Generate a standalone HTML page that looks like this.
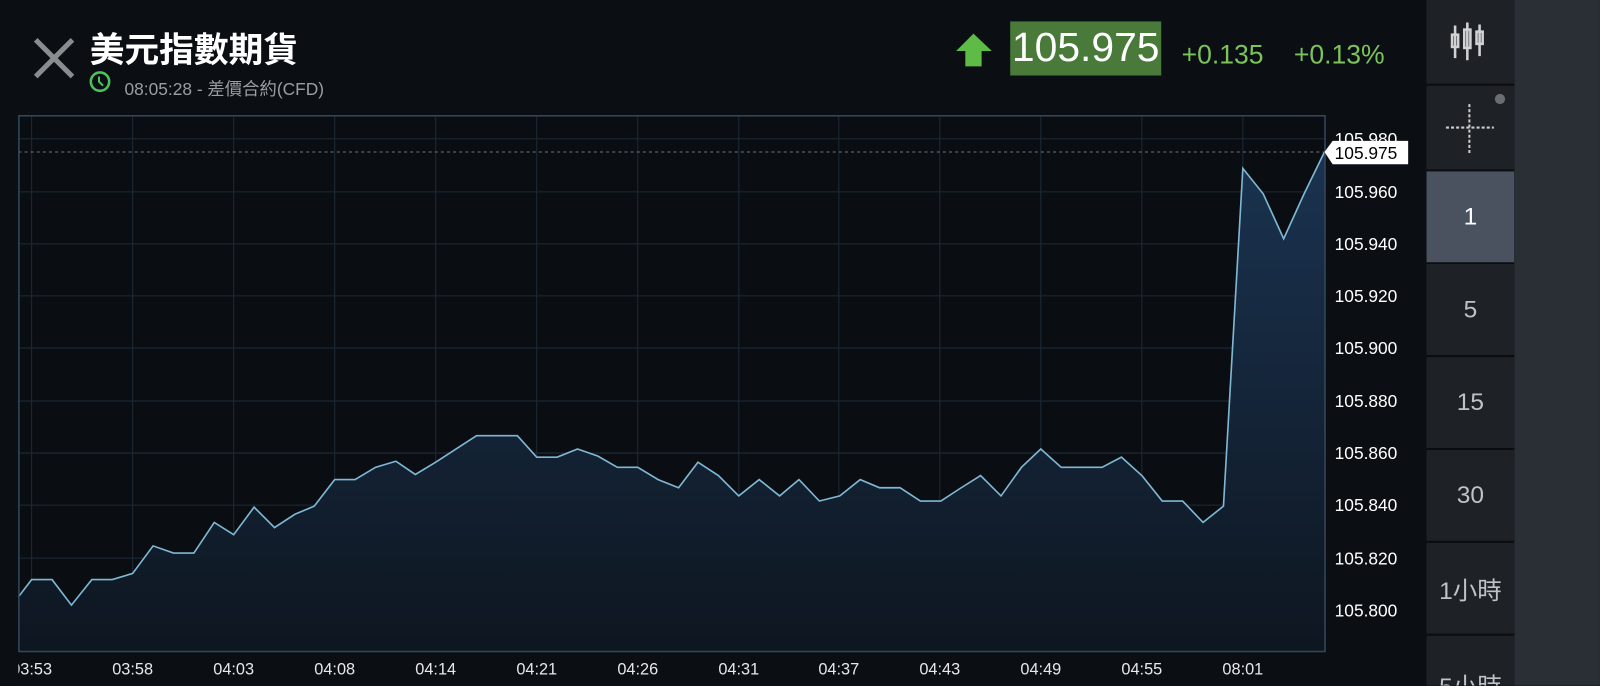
<!DOCTYPE html>
<html><head><meta charset="utf-8"><style>
*{margin:0;padding:0;box-sizing:border-box}
html,body{width:1600px;height:686px;overflow:hidden;background:#0b0f14}
body{font-family:"Liberation Sans","Noto Sans CJK TC",sans-serif;position:relative}
#wrap{position:absolute;left:0;top:0;width:1568px;height:672px;overflow:hidden;transform:scale(1.0204);transform-origin:0 0}
.abs{position:absolute}
.title{left:88px;top:22px;font-size:34px;font-weight:bold;color:#fff;white-space:nowrap}
.sub{left:122px;top:73px;font-size:17px;color:#9a9ea3;white-space:nowrap}
.price{left:990px;top:21px;width:148px;height:53px;background:#497a3a;color:#fff;font-size:40px;line-height:53px;text-align:center}
.chg{top:38px;font-size:26px;color:#7cc35a}
.side{left:1398px;top:0;width:86px;height:672px;background:#1e2125;overflow:hidden}
.right{left:1484px;top:0;width:84px;height:672px;background:#2a2e35}
.btn{position:absolute;left:0;width:86px;color:#bfc2c6;font-size:24px;text-align:center;border-bottom:2px solid #0b0d10;display:flex;align-items:center;justify-content:center;overflow:hidden}
</style></head><body><div id="wrap">
<svg class="abs" style="left:0;top:0" width="1568" height="672">
<path d="M35 39 L71 75 M71 39 L35 75" stroke="#8a8d90" stroke-width="5"/>
<circle cx="98" cy="80" r="9" fill="none" stroke="#4cc25a" stroke-width="2.5"/>
<path d="M97 75 V80 L101 84" stroke="#4cc25a" stroke-width="2" fill="none"/>
<path d="M954 33 L972 50 H962 V65 H946 V50 H937 Z" fill="#5dbb46"/>
<defs><linearGradient id="g" x1="0" y1="0" x2="0" y2="1"><stop offset="0" stop-color="#1a3350"/><stop offset="1" stop-color="#0e1620"/></linearGradient></defs>
<rect x="18" y="113" width="1280" height="525" fill="#0a0e13"/>
<g stroke="#1d2a38" stroke-width="1">
<line x1="18" y1="136" x2="1298" y2="136"/><line x1="18" y1="188" x2="1298" y2="188"/><line x1="18" y1="239" x2="1298" y2="239"/><line x1="18" y1="290" x2="1298" y2="290"/><line x1="18" y1="341" x2="1298" y2="341"/><line x1="18" y1="393" x2="1298" y2="393"/><line x1="18" y1="444" x2="1298" y2="444"/><line x1="18" y1="495" x2="1298" y2="495"/><line x1="18" y1="547" x2="1298" y2="547"/><line x1="18" y1="598" x2="1298" y2="598"/>
<line x1="31" y1="113" x2="31" y2="638"/><line x1="130" y1="113" x2="130" y2="638"/><line x1="229" y1="113" x2="229" y2="638"/><line x1="328" y1="113" x2="328" y2="638"/><line x1="427" y1="113" x2="427" y2="638"/><line x1="526" y1="113" x2="526" y2="638"/><line x1="625" y1="113" x2="625" y2="638"/><line x1="724" y1="113" x2="724" y2="638"/><line x1="822" y1="113" x2="822" y2="638"/><line x1="921" y1="113" x2="921" y2="638"/><line x1="1020" y1="113" x2="1020" y2="638"/><line x1="1119" y1="113" x2="1119" y2="638"/><line x1="1218" y1="113" x2="1218" y2="638"/>
</g>
<path d="M18 585 L31 568 L51 568 L70 593 L90 568 L110 568 L130 562 L150 535 L170 542 L190 542 L210 512 L229 524 L249 497 L269 517 L289 504 L308 496 L328 470 L348 470 L368 458 L388 452 L407 465 L427 453 L447 440 L467 427 L507 427 L526 448 L546 448 L566 440 L586 447 L605 458 L625 458 L645 470 L665 478 L684 453 L704 466 L724 486 L744 470 L764 486 L783 470 L803 491 L823 486 L843 470 L862 478 L882 478 L902 491 L922 491 L942 478 L961 466 L981 486 L1001 458 L1020 440 L1040 458 L1060 458 L1080 458 L1099 448 L1119 466 L1139 491 L1159 491 L1179 512 L1199 496 L1218 165 L1238 190 L1258 234 L1278 190 L1298 149 L1298 638 L18 638 Z" fill="url(#g)"/>
<path d="M18 585 L31 568 L51 568 L70 593 L90 568 L110 568 L130 562 L150 535 L170 542 L190 542 L210 512 L229 524 L249 497 L269 517 L289 504 L308 496 L328 470 L348 470 L368 458 L388 452 L407 465 L427 453 L447 440 L467 427 L507 427 L526 448 L546 448 L566 440 L586 447 L605 458 L625 458 L645 470 L665 478 L684 453 L704 466 L724 486 L744 470 L764 486 L783 470 L803 491 L823 486 L843 470 L862 478 L882 478 L902 491 L922 491 L942 478 L961 466 L981 486 L1001 458 L1020 440 L1040 458 L1060 458 L1080 458 L1099 448 L1119 466 L1139 491 L1159 491 L1179 512 L1199 496 L1218 165 L1238 190 L1258 234 L1278 190 L1298 149" fill="none" stroke="#7fb8d4" stroke-width="1.6"/>
<line x1="18" y1="149" x2="1298" y2="149" stroke="#6a7480" stroke-dasharray="3,3"/>
<rect x="18.5" y="113.5" width="1280" height="525" fill="none" stroke="#34485c" stroke-width="1.5"/>
<g fill="#fff" font-size="17" font-family="Liberation Sans,sans-serif">
<text x="1308" y="142">105.980</text><text x="1308" y="194">105.960</text><text x="1308" y="245">105.940</text><text x="1308" y="296">105.920</text><text x="1308" y="347">105.900</text><text x="1308" y="399">105.880</text><text x="1308" y="450">105.860</text><text x="1308" y="501">105.840</text><text x="1308" y="553">105.820</text><text x="1308" y="604">105.800</text>
</g>
<path d="M1298 149 L1306 138 H1380 V161 H1306 Z" fill="#fff"/>
<text x="1308" y="156" font-size="17" fill="#000">105.975</text>
<g fill="#e6e8ea" font-size="16" text-anchor="middle">
<text x="31" y="661">03:53</text><text x="130" y="661">03:58</text><text x="229" y="661">04:03</text><text x="328" y="661">04:08</text><text x="427" y="661">04:14</text><text x="526" y="661">04:21</text><text x="625" y="661">04:26</text><text x="724" y="661">04:31</text><text x="822" y="661">04:37</text><text x="921" y="661">04:43</text><text x="1020" y="661">04:49</text><text x="1119" y="661">04:55</text><text x="1218" y="661">08:01</text>
</g>
<rect x="0" y="640" width="18" height="32" fill="#0b0f14"/>
</svg>
<div class="abs title">美元指數期貨</div>
<div class="abs sub">08:05:28 - 差價合約(CFD)</div>
<div class="abs price">105.975</div>
<div class="abs chg" style="left:1158px">+0.135</div>
<div class="abs chg" style="left:1268px">+0.13%</div>
<div class="abs right"></div>
<div class="abs side">
 <div class="btn" style="top:0;height:84px">
  <svg width="44" height="44" viewBox="0 0 44 44"><g stroke="#d0d2d4" stroke-width="2.5" fill="none"><line x1="7" y1="6" x2="7" y2="38"/><rect x="4" y="15" width="6" height="12"/><line x1="19" y1="3" x2="19" y2="40"/><rect x="16" y="10" width="6" height="18"/><line x1="31" y1="5" x2="31" y2="36"/><rect x="28" y="12" width="6" height="12"/></g></svg>
 </div>
 <div class="btn" style="top:84px;height:84px">
  <svg width="86" height="82"><line x1="19" y1="41" x2="66" y2="41" stroke="#ccc" stroke-width="2" stroke-dasharray="3,2"/><line x1="42" y1="18" x2="42" y2="66" stroke="#ccc" stroke-width="2" stroke-dasharray="3,2"/><circle cx="72" cy="13" r="5" fill="#6a6d72"/></svg>
 </div>
 <div class="btn" style="top:168px;height:91px;background:#4a5260;color:#fff">1</div>
 <div class="btn" style="top:259px;height:91px">5</div>
 <div class="btn" style="top:350px;height:91px">15</div>
 <div class="btn" style="top:441px;height:91px">30</div>
 <div class="btn" style="top:532px;height:91px">1小時</div>
 <div class="btn" style="top:623px;height:49px;border-bottom:0;align-items:flex-start;padding-top:30px">5小時</div>
</div>
</div></body></html>
